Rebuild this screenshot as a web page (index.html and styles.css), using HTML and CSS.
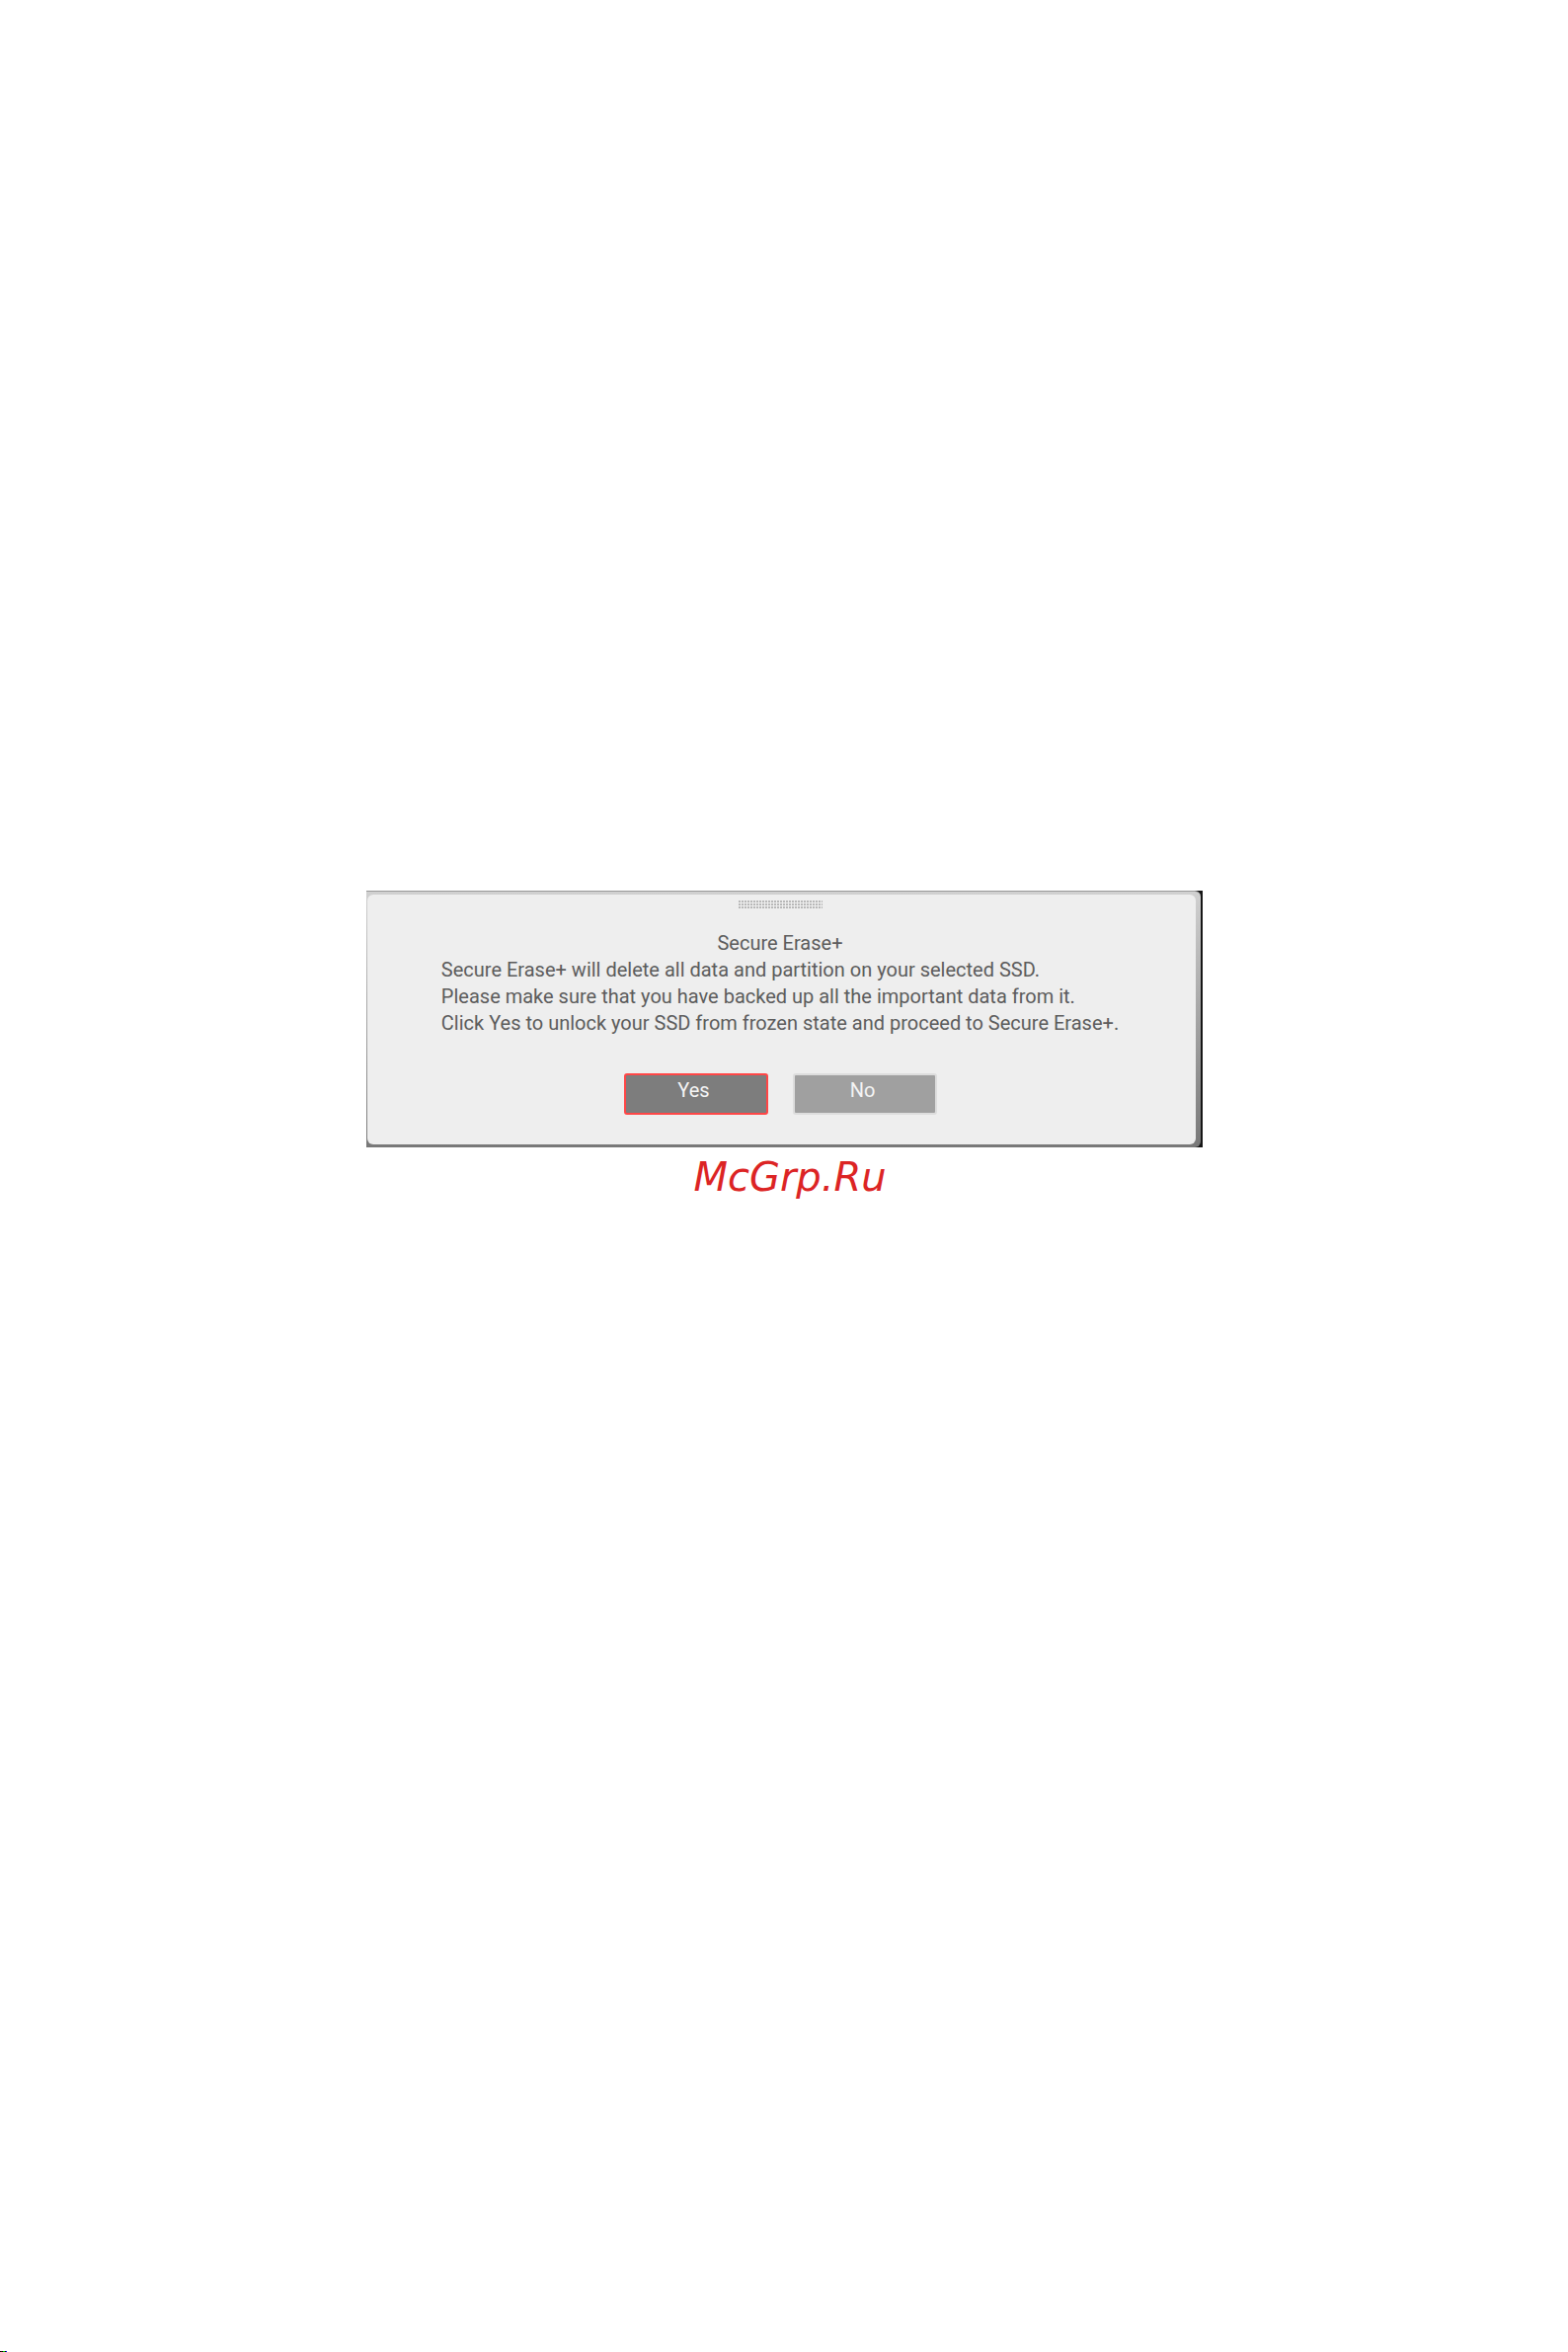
FILE: index.html
```html
<!DOCTYPE html>
<html lang="en">
<head>
    <meta charset="UTF-8">
    <meta name="viewport" content="width=device-width, initial-scale=1.0">
    <title>Secure Erase+</title>
    <link rel="stylesheet" href="styles.css">
</head>
<body>

    <main class="content">
        <div class="backdrop">
            <div class="frame">
                <div class="dialog" role="dialog" aria-labelledby="title">
                    <div class="grip"></div>
                    <h1 class="title" id="title">Secure Erase+</h1>
                    <p class="message">
                        Secure Erase+ will delete all data and partition on your selected SSD.<br>
                        Please make sure that you have backed up all the important data from it.<br>
                        Click Yes to unlock your SSD from frozen state and proceed to Secure Erase+.
                    </p>
                    <div class="buttons">
                        <button class="btn btn-yes" type="button">Yes</button>
                        <button class="btn btn-no" type="button">No</button>
                    </div>
                </div>
            </div>
        </div>
        <a class="site" href="#">McGrp.Ru</a>
    </main>

    <div class="mark"></div>

</body>
</html>
```

FILE: styles.css
```css
* {
    box-sizing: border-box;
}
body {
    margin: 0;
    min-height: 100vh;
    display: grid;
    grid-template-rows: 7fr auto 9fr;
    background: white;
    font-family: Roboto, "Liberation Sans", sans-serif;
    font-size: 20px;
    line-height: 27px;
    color: #5c5c5c;
}
.content {
    grid-row: 2;
    display: flex;
    flex-direction: column;
    align-items: center;
}

/* Dialog */
.backdrop {
    width: 90%;
    max-width: 847px;
    padding-right: 2px;
    background: #161616;
}
.frame {
    padding: 3px 5px 3px 1px;
    border-top: 1px solid #999;
    border-radius: 0 6px 6px 0;
    background: linear-gradient(#d0d0d0, #787878);
}
.dialog {
    display: flex;
    flex-direction: column;
    align-items: center;
    padding: 6px 18px 30px 16px;
    border-radius: 6px;
    background: #eee;
}
.grip {
    width: 85px;
    height: 8px;
    background:
        repeating-linear-gradient(to right, transparent 0 2px, #eee 2px 3px),
        repeating-linear-gradient(to bottom, #b8b8b8 0 2px, #eee 2px 3px);
}
.title {
    margin: 22px 0 0;
    font-size: 20px;
    font-weight: 400;
}
.message {
    margin: 0;
}

/* Buttons */
.buttons {
    display: flex;
    gap: 25px;
    margin-top: 37px;
}
.btn {
    width: 146px;
    height: 42px;
    padding: 0 4px 8px 0;
    border: 2px solid #ddd;
    border-radius: 3px;
    font: inherit;
    color: #f4f4f4;
    cursor: pointer;
}
.btn-yes {
    border-color: #ff4646;
    background: #7d7d7d;
}
.btn-no { background: #a0a0a0; }

.site {
    padding-left: 12px;
    font-family: "DejaVu Sans", sans-serif;
    font-size: 40px;
    font-style: italic;
    line-height: 60px;
    color: #dc2424;
    text-decoration: none;
}

/* Page corner mark */
.mark {
    grid-row: 3;
    align-self: end;
    width: 7px;
    height: 1px;
    background: linear-gradient(to right, #000 0 1px, #400 1px 2px, #000 2px 3px, #0c0 3px 5px, #000 5px 6px, #00f 6px 7px);
}
```
